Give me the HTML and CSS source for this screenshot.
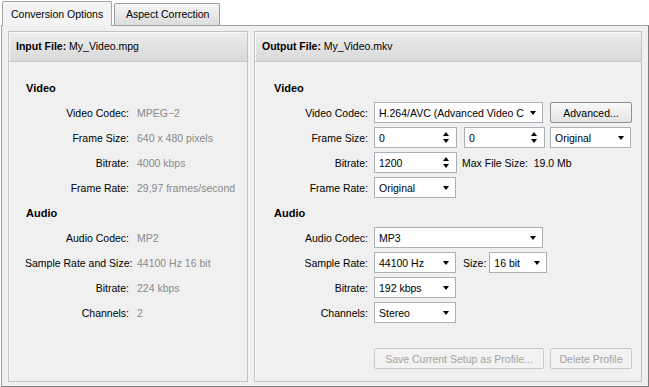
FILE: index.html
```html
<!DOCTYPE html>
<html lang="en">
<head>
  <meta charset="UTF-8" />
  <title>Conversion Options</title>
  <link rel="stylesheet" href="styles.css">
</head>
<body>
  <div class="tabs">
    <div class="tab active">Conversion Options</div>
    <div class="tab">Aspect Correction</div>
  </div>
  <div class="pane">
    <!-- Source file, read only -->
    <section class="group input">
      <div class="group-head"><b>Input File:</b> My_Video.mpg</div>
      <div class="group-body">
        <div class="heading">Video</div>
        <span class="label">Video Codec:</span><span class="value">MPEG&minus;2</span>
        <span class="label">Frame Size:</span><span class="value">640 x 480 pixels</span>
        <span class="label">Bitrate:</span><span class="value">4000 kbps</span>
        <span class="label">Frame Rate:</span><span class="value">29,97 frames/second</span>
        <div class="heading">Audio</div>
        <span class="label">Audio Codec:</span><span class="value">MP2</span>
        <span class="label">Sample Rate and Size:</span><span class="value">44100 Hz 16 bit</span>
        <span class="label">Bitrate:</span><span class="value">224 kbps</span>
        <span class="label">Channels:</span><span class="value">2</span>
      </div>
    </section>

    <!-- Target file settings -->
    <section class="group output">
      <div class="group-head"><b>Output File:</b> My_Video.mkv</div>
      <div class="group-body">
        <div class="form">
          <div class="heading">Video</div>
          <span class="label">Video Codec:</span>
          <div class="controls">
            <div class="combo w-wide"><span class="text">H.264/AVC (Advanced Video C</span><i class="arrow"></i></div>
            <button class="btn w-btn">Advanced...</button>
          </div>
          <span class="label">Frame Size:</span>
          <div class="controls">
            <div class="spin w-83"><span class="text">0</span><i class="updown"></i></div>
            <div class="spin w-81 ml-7"><span class="text">0</span><i class="updown"></i></div>
            <div class="combo w-81 ml-5"><span class="text">Original</span><i class="arrow"></i></div>
          </div>
          <span class="label">Bitrate:</span>
          <div class="controls">
            <div class="spin w-83"><span class="text">1200</span><i class="updown"></i></div>
            <span class="note">Max File Size:&nbsp; 19.0 Mb</span>
          </div>
          <span class="label">Frame Rate:</span>
          <div class="controls">
            <div class="combo w-82"><span class="text">Original</span><i class="arrow"></i></div>
          </div>
          <div class="heading">Audio</div>
          <span class="label">Audio Codec:</span>
          <div class="controls">
            <div class="combo w-wide"><span class="text">MP3</span><i class="arrow"></i></div>
          </div>
          <span class="label">Sample Rate:</span>
          <div class="controls">
            <div class="combo w-82"><span class="text">44100 Hz</span><i class="arrow"></i></div>
            <span class="note size">Size:</span>
            <div class="combo w-58"><span class="text">16 bit</span><i class="arrow"></i></div>
          </div>
          <span class="label">Bitrate:</span>
          <div class="controls">
            <div class="combo w-82"><span class="text">192 kbps</span><i class="arrow"></i></div>
          </div>
          <span class="label">Channels:</span>
          <div class="controls">
            <div class="combo w-82"><span class="text">Stereo</span><i class="arrow"></i></div>
          </div>
        </div>
        <div class="actions">
          <button class="btn w-save" disabled>Save Current Setup as Profile...</button>
          <button class="btn w-btn" disabled>Delete Profile</button>
        </div>
      </div>
    </section>
  </div>
</body>
</html>
```

FILE: styles.css
```css
/* Global Styles */
body {
  margin: 0;
  background-color: #fff;
  color: #000;
  font-family: "Liberation Sans", Arial, sans-serif;
  font-size: 10.5px;
  width: 649px;
  height: 387px;
  overflow: hidden;
}

/* Tabs */
.tabs {
  display: flex;
  align-items: flex-end;
  gap: 2px;
  height: 25px;
  padding-left: 2px;
}
.tab {
  box-sizing: border-box;
  height: 22px;
  padding: 0 8px;
  line-height: 21px;
  border: 1px solid #9a9a9a;
  border-bottom: none;
  border-radius: 2px 2px 0 0;
  background: linear-gradient(#f6f6f6, #dcdcdc);
  white-space: nowrap;
}
.tab.active {
  position: relative;
  z-index: 1;
  height: 25px;
  width: 110px;
  line-height: 24px;
  padding-left: 8px;
  background: #f4f4f4;
  border-color: #a5a5a5;
  margin-bottom: -1px;
}
.tab:not(.active) {
  width: 106px;
  padding-left: 11px;
}

/* Pane */
.pane {
  box-sizing: border-box;
  display: flex;
  gap: 6px;
  margin: 0 0 0 1px;
  width: 648px;
  height: 362px;
  padding: 5px 5px 4px 6px;
  background-color: #f0f0f0;
  border: 1px solid #a0a0a0;
  border-right-color: #7d7d7d;
  border-bottom-color: #7d7d7d;
}

/* Group boxes */
.group {
  box-sizing: border-box;
  display: flex;
  flex-direction: column;
  border: 1px solid #c2c2c2;
  background-color: #f0f0f0;
  box-shadow: inset 1px 1px 0 #fafafa;
}
.group.input {
  width: 240px;
}
.group.output {
  width: 388px;
}
.group-head {
  height: 29px;
  line-height: 29px;
  padding-left: 7px;
  border-bottom: 1px solid #c6c6c6;
  background: linear-gradient(#ededed, #d9d9d9);
  box-shadow: inset 1px 1px 0 #fafafa;
  white-space: nowrap;
}
.group-body {
  flex: 1;
  display: flex;
  flex-direction: column;
  padding-top: 13px;
}
.input .group-body {
  display: grid;
  grid-template-columns: 104px auto;
  grid-auto-rows: 25px;
  align-content: start;
  align-items: center;
  column-gap: 8px;
  padding-left: 16px;
}
.form {
  display: grid;
  grid-template-columns: 95px auto;
  grid-auto-rows: 25px;
  align-items: center;
  column-gap: 6px;
  padding-left: 18px;
}
.heading {
  grid-column: 1 / -1;
  font-weight: bold;
  font-size: 11px;
  padding-left: 1px;
}
.label {
  text-align: right;
  white-space: nowrap;
}
.value {
  color: #8a8a8a;
  white-space: nowrap;
}

/* Form controls */
.controls {
  display: flex;
  align-items: center;
}
.combo, .spin {
  box-sizing: border-box;
  display: flex;
  align-items: center;
  height: 21px;
  padding: 0 6px 0 4px;
  background-color: #fff;
  border: 1px solid #aab0b6;
}
.text {
  flex: 1;
  white-space: nowrap;
}
.arrow {
  flex: none;
  width: 0;
  height: 0;
  margin-left: 2px;
  border-left: 3.5px solid transparent;
  border-right: 3.5px solid transparent;
  border-top: 4px solid #000;
}
.updown {
  flex: none;
  position: relative;
  width: 7px;
  height: 11px;
  margin-left: 4px;
}
.updown::before, .updown::after {
  content: "";
  position: absolute;
  left: 0;
  border-left: 3.5px solid transparent;
  border-right: 3.5px solid transparent;
}
.updown::before {
  top: 0;
  border-bottom: 4px solid #000;
}
.updown::after {
  bottom: 0;
  border-top: 4px solid #000;
}
.note {
  margin-left: 5px;
  white-space: nowrap;
}
.note.size {
  margin-left: 7px;
  margin-right: 3px;
}

.w-wide { width: 169px; }
.w-83 { width: 83px; }
.w-82 { width: 82px; }
.w-81 { width: 81px; }
.w-58 { width: 58px; }
.w-btn { width: 82px; }
.w-save { width: 170px; }
.ml-7 { margin-left: 7px; }
.ml-5 { margin-left: 5px; }
.controls .btn { margin-left: 7px; }

.btn {
  box-sizing: border-box;
  height: 21px;
  padding: 0;
  font: inherit;
  color: #000;
  border: 1px solid #8e8f8f;
  border-radius: 2px;
  background: linear-gradient(#f9f9f9, #e3e3e3);
}
.btn:disabled {
  color: #a3a3a3;
  border-color: #c9c9c9;
  background: #f2f2f2;
}
.actions {
  margin-top: auto;
  display: flex;
  justify-content: flex-end;
  gap: 6px;
  padding: 0 9px 12px 0;
}
```
